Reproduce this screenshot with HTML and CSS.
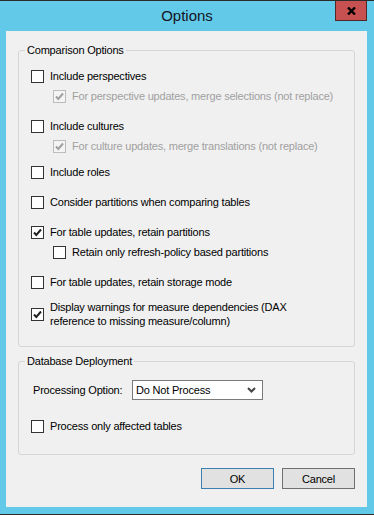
FILE: index.html
```html
<!DOCTYPE html>
<html lang="en">
<head>
	<meta charset="UTF-8">
	<link rel="stylesheet" href="styles.css">
	<title>Options</title>
</head>
<body>

<div class="window">
	<div class="titlebar">
		<span></span>
		<div class="title">Options</div>
		<button class="close" title="Close">
			<svg width="9" height="8" viewBox="0 0 9 8"><path d="M1 0.5 L8 7.5 M8 0.5 L1 7.5" stroke="#000" stroke-width="2.4"/></svg>
		</button>
	</div>

	<div class="client">

		<fieldset class="group">
			<legend>Comparison Options</legend>

			<label class="opt">
				<span class="box"></span>Include perspectives
			</label>
			<label class="opt sub disabled">
				<span class="box"><svg width="11" height="11" viewBox="0 0 11 11"><path d="M2 5.5 L4.3 8 L9 2.5" /></svg></span>For perspective updates, merge selections (not replace)
			</label>

			<label class="opt">
				<span class="box"></span>Include cultures
			</label>
			<label class="opt sub disabled">
				<span class="box"><svg width="11" height="11" viewBox="0 0 11 11"><path d="M2 5.5 L4.3 8 L9 2.5" /></svg></span>For culture updates, merge translations (not replace)
			</label>

			<label class="opt tight">
				<span class="box"></span>Include roles
			</label>

			<label class="opt">
				<span class="box"></span>Consider partitions when comparing tables
			</label>

			<label class="opt">
				<span class="box"><svg width="11" height="11" viewBox="0 0 11 11"><path d="M2 5.5 L4.3 8 L9 2.5" /></svg></span>For table updates, retain partitions
			</label>
			<label class="opt sub">
				<span class="box"></span>Retain only refresh-policy based partitions
			</label>

			<label class="opt">
				<span class="box"></span>For table updates, retain storage mode
			</label>

			<label class="opt tight multi">
				<span class="box"><svg width="11" height="11" viewBox="0 0 11 11"><path d="M2 5.5 L4.3 8 L9 2.5" /></svg></span>
				<span>Display warnings for measure dependencies (DAX<br>reference to missing measure/column)</span>
			</label>
		</fieldset>

		<fieldset class="group deploy">
			<legend>Database Deployment</legend>

			<div class="field">
				<span class="field-label">Processing Option:</span>
				<div class="combo">
					<span>Do Not Process</span>
					<svg width="9" height="6" viewBox="0 0 9 6"><path d="M1 1 L4.5 4.5 L8 1" fill="none" stroke="#444" stroke-width="2"/></svg>
				</div>
			</div>

			<label class="opt affected">
				<span class="box"></span>Process only affected tables
			</label>
		</fieldset>

		<div class="buttons">
			<button class="btn default">OK</button>
			<button class="btn">Cancel</button>
		</div>

	</div><!-- end of client -->
</div><!-- end of window -->

</body>
</html>
```

FILE: styles.css
```css
body {
	margin: 0;
	font-family: "Liberation Sans", Arial, sans-serif;
	font-size: 11px;
	letter-spacing: -0.2px;
	color: #000;
}

.window {
	width: 374px;
	height: 515px;
	box-sizing: border-box;
	background-color: rgb(98, 201, 233);
	border-top: 1px solid rgb(43, 43, 43);
	border-bottom: 1px solid rgb(43, 43, 43);
}

.titlebar {
	display: grid;
	grid-template-columns: 1fr auto 1fr;
	height: 30px;
}
	.title {
		font-size: 15px;
		line-height: 30px;
		letter-spacing: 0;
		color: rgb(20, 20, 30);
	}

.close {
	justify-self: end;
	align-self: start;
	width: 32px;
	height: 20px;
	margin-right: 7px;
	padding: 0;
	display: flex;
	align-items: center;
	justify-content: center;
	background-color: rgb(199, 80, 80);
	border: 1px solid rgb(80, 40, 40);
	border-top: none;
}

.client {
	height: 476px;
	margin: 0 7px 0 6px;
	padding: 11px 12px 0;
	box-sizing: border-box;
	background-color: rgb(240, 240, 240);
}

.group {
	margin: 0;
	padding: 10px 12px 18px;
	border: 1px solid rgb(213, 213, 213);
	border-radius: 3px;
	min-width: 0;
}
	.group legend {
		margin-left: -6px;
		padding: 0 2px;
		line-height: 16px;
	}

.deploy {
	margin-top: 6px;
	padding-top: 11px;
	padding-bottom: 20px;
}

.opt {
	display: flex;
	align-items: center;
	gap: 6px;
	height: 16px;
	line-height: 16px;
	margin-top: 14px;
	white-space: nowrap;
}
	.opt:first-of-type {
		margin-top: 0;
	}
	.opt.sub {
		margin-top: 4px;
		padding-left: 22px;
	}
	.opt.tight {
		margin-top: 10px;
	}
	.opt.multi {
		height: 28px;
		line-height: 14px;
	}
	.opt.affected {
		margin-top: 18px;
	}

.box {
	flex: none;
	width: 13px;
	height: 13px;
	box-sizing: border-box;
	border: 1px solid rgb(51, 51, 51);
	background-color: #fff;
	display: flex;
}
	.box path {
		fill: none;
		stroke: rgb(34, 34, 34);
		stroke-width: 2;
	}

.disabled {
	color: rgb(160, 160, 160);
}
	.disabled .box {
		border-color: rgb(188, 188, 188);
		background-color: rgb(244, 244, 244);
	}
	.disabled .box path {
		stroke: rgb(160, 160, 160);
	}

.field {
	display: flex;
	align-items: center;
	height: 20px;
}
	.field-label {
		flex: none;
		width: 99px;
		margin-left: 2px;
		white-space: nowrap;
	}

.combo {
	flex: none;
	width: 131px;
	height: 20px;
	box-sizing: border-box;
	border: 1px solid rgb(122, 122, 122);
	background-color: #fff;
	display: flex;
	align-items: center;
	justify-content: space-between;
	padding: 0 6px 0 3px;
}

.buttons {
	display: flex;
	justify-content: flex-end;
	gap: 8px;
	margin-top: 13px;
}

.btn {
	width: 73px;
	height: 21px;
	padding: 0;
	font-family: inherit;
	font-size: 11px;
	letter-spacing: inherit;
	color: #000;
	background-color: rgb(225, 225, 225);
	border: 1px solid rgb(112, 112, 112);
}
	.btn.default {
		border-color: rgb(60, 127, 177);
	}
```
